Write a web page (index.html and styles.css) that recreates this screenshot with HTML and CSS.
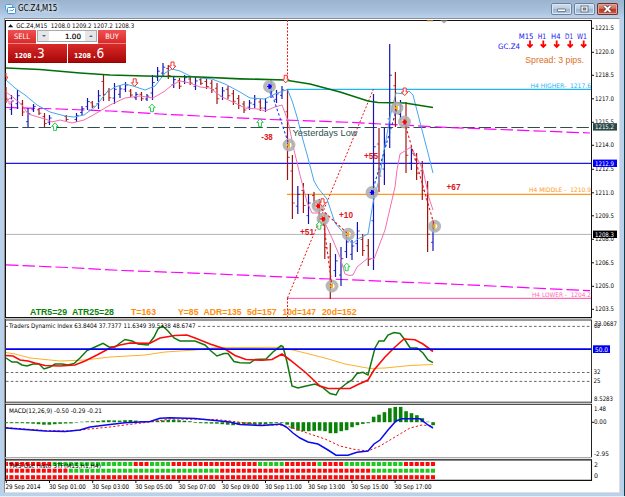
FILE: index.html
```html
<!DOCTYPE html>
<html lang="en">
<head>
<meta charset="utf-8">
<title>GC.Z4,M15</title>
<link rel="stylesheet" href="styles.css">
</head>
<body>
<div class="window">
  <header class="titlebar">
    <svg class="app-icon" width="11" height="10" viewBox="0 0 11 10">
      <rect x="0.5" y="0.5" width="7" height="6" rx="1" fill="#e8f5ff" stroke="#4d9bd8"/>
      <rect x="2.5" y="3.5" width="8" height="6" rx="1" fill="#fff" stroke="#3d8fd0"/>
      <path d="M4 7.5l1.5-1.5 1.5 1 2-2" fill="none" stroke="#4d9bd8"/>
    </svg>
    <span class="title">GC.Z4,M15</span>
    <div class="controls">
      <span class="btn"><svg width="21" height="12" viewBox="0 0 21 12"><rect x="6.5" y="6" width="8" height="2.6" rx=".5" fill="#fff" stroke="#56606c" stroke-width=".8"/></svg></span>
      <span class="btn"><svg width="21" height="12" viewBox="0 0 21 12"><rect x="7" y="3" width="7" height="6" fill="#fff" stroke="#56606c" stroke-width=".8"/><rect x="9.2" y="5" width="2.6" height="2" fill="#8ea9c8" stroke="#56606c" stroke-width=".8"/></svg></span>
      <span class="btn close"><svg width="21" height="12" viewBox="0 0 21 12"><path d="M7.5 3l6 6M13.5 3l-6 6" stroke="#5c3434" stroke-width="3.2"/><path d="M7.5 3l6 6M13.5 3l-6 6" stroke="#fff" stroke-width="1.9"/></svg></span>
    </div>
  </header>
  <main class="client">
    <section class="panel main-panel">
      <svg id="price" width="615" height="299" viewBox="5 20 615 299"></svg>
      <div class="trade">
        <div class="trade-top">
          <span class="side">SELL</span>
          <div class="lots"><i class="step down"></i><b>1.00</b><i class="step up"></i></div>
          <span class="side">BUY</span>
        </div>
        <div class="trade-prices">
          <div class="quote"><small>1208</small><strong>.3</strong></div>
          <div class="quote"><small>1208</small><strong>.6</strong></div>
        </div>
      </div>
    </section>
    <section class="panel"><svg id="tdi" width="615" height="84" viewBox="5 319 615 84"></svg></section>
    <section class="panel"><svg id="macd" width="615" height="56" viewBox="5 403 615 56"></svg></section>
    <section class="panel"><svg id="tms" width="615" height="33" viewBox="5 459 615 33"></svg></section>
  </main>
</div>
<script src="chart.js"></script>
</body>
</html>
```
FILE: styles.css
```css
* { box-sizing: border-box; }
body { margin: 0; width: 625px; height: 497px; overflow: hidden; background: #e6eef6; }
.window {
  width: 625px; height: 496px; display: flex; flex-direction: column;
  background: #b9d1ea; border-right: 1px solid #123c48;
}
.titlebar {
  height: 18px; flex: none; display: flex; align-items: center;
  padding: 0 6px 0 5px; gap: 2px;
  background: linear-gradient(#9bb3cf, #a6bfda 55%, #bad2ec);
}
.app-icon { flex: none; }
.title {
  font: 8px/18px "DejaVu Sans Condensed", "DejaVu Sans", sans-serif;
  color: #000; text-shadow: 0 0 4px #fff, 0 0 5px #fff; letter-spacing: -.1px;
}
.controls { margin-left: auto; display: flex; gap: 2px; }
.btn {
  width: 21px; height: 12px; display: block; border-radius: 2px;
  background: linear-gradient(#d3e0ef, #bccfe5 45%, #9cb6d3 50%, #b7cde6);
  box-shadow: inset 0 0 0 1px #6d819b, inset 0 0 0 2px #dbe7f4;
}
.btn svg { display: block; }
.close {
  background: linear-gradient(#e0a090, #cf7460 45%, #b93420 50%, #d0644a);
  box-shadow: inset 0 0 0 1px #70302c, inset 0 0 0 2px #e2a498;
}
.client {
  margin: 0 4px 0 4px; flex: none; background: #fff;
  border-top: 1px solid #8f8f8f; border-left: 1px solid #8f8f8f;
  border-bottom: 1px solid #dfdfdf; border-right: 1px solid #dfdfdf;
  padding-top: 1px; height: 475px;
}
.panel { height: auto; }
.panel > svg { display: block; }
.main-panel { position: relative; }
.trade { position: absolute; left: 3px; top: 10px; width: 118px; }
.trade-top { display: flex; height: 14px; justify-content: space-between; }
.side {
  width: 28px; background: linear-gradient(#f05050, #da2a2a);
  border-bottom: 1px solid #e88; color: #fff; text-align: center;
  font: 7.4px/14px "DejaVu Sans Condensed", sans-serif;
}
.lots {
  width: 60px; height: 12px; display: flex; border: 1px solid #a9a9a9; background: #fff;
}
.lots b { flex: 1; text-align: right; padding-right: 4px; font: 7.2px/11px "DejaVu Sans", sans-serif; color: #000; -webkit-text-stroke: .2px #000; }
.step { width: 11px; background: #e6e6e6; display: flex; align-items: center; justify-content: center; }
.step::after { content: ""; border: 2px solid transparent; }
.down::after { border-top-color: #46689c; margin-top: 2px; }
.up::after { border-bottom-color: #46689c; margin-bottom: 2px; }
.trade-prices { display: flex; gap: 1px; height: 18.5px; }
.quote {
  flex: 1; display: flex; align-items: baseline; gap: 1.5px; padding-left: 6.5px; color: #fff;
  background: linear-gradient(#da2a2a, #a80808); border-bottom: 1px solid #900;
  font-family: "DejaVu Sans Condensed", sans-serif;
}
.quote small { font-size: 6.8px; font-weight: bold; line-height: 19px; }
.quote strong { font-size: 13.5px; font-weight: normal; line-height: 19px; }
text { font-family: "DejaVu Sans", sans-serif; white-space: pre; }
.arial { font-family: "Liberation Sans", Arial, sans-serif; }
.bold { font-weight: bold; }
```
FILE: chart.js
```javascript
const NS = 'http://www.w3.org/2000/svg';
let layer;
const use = id => { layer = document.getElementById(id); };

function el(name, attrs) {
  const e = document.createElementNS(NS, name);
  for (const k in attrs) e.setAttribute(k, attrs[k]);
  layer.appendChild(e);
  return e;
}
const rect = (x, y, width, height, fill) => el('rect', { x, y, width, height, fill });
const path = (d, stroke, w = 1, dash = '') =>
  el('path', { d, stroke, fill: 'none', 'stroke-width': w, 'stroke-dasharray': dash });
const curve = (pts, stroke, w, dash) => path('M' + pts, stroke, w, dash);
function text(s, x, y, width, fill = '#000', size = 6.3, cls = '') {
  const t = el('text', { x, y, fill, textLength: width, lengthAdjust: 'spacingAndGlyphs', class: cls });
  t.style.fontSize = size + 'px';
  t.textContent = s;
}
const RED = '#a01414', BLUE = '#1414b4', INK = '#000';

/* ---- price ---- */
use('price');
path('M5.5 20V318M5 20.5H592M591.5 20V318M5 317.5H592', '#111');
path('M5 318.8H592', '#999', .8);
path('M6 127.5H591', '#2f4f4f', 1, '12.3 4');
path('M6 163.4H591', '#1818f0', 1.1);
path('M6 234.4H591', '#b4b4b4', 1);
path('M287 89.4H591', '#1eb4f5', 1.1);
path('M287 194.4H591', '#ff9a1e', 1.1);
path('M287 298.4H591', '#ff69b4', 1.1);
curve('6 107.5 60 109 110 111 160 114 210 116.5 270 119.5 350 122.3 400 125 450 127.5 590 133', '#f0f', 1.2, '12.5 4');
curve('6 264.8 67 267.5 122 270.5 200 273.3 330 279 460 284.5 590 290.7', '#f0f', 1.2, '12.5 4');
path('M287.5 20V80M287.5 298V318', '#f01414', 1, '2 1.5');
path('M287.5 298L373.5 89', '#f01414', 1, '2 1.8');

const bars = [
  [6, 87, 103, 0], [11.5, 95, 115, 1], [17.5, 90, 109, 1], [22.5, 100, 116, 0], [28, 108, 127, 1],
  [33.5, 104, 112, 1], [39, 108, 115, 0], [44.5, 113, 127, 0], [49.5, 115, 125, 1], [66.3, 115, 121, 0],
  [76.5, 113, 122, 1], [82, 106, 115, 1], [87.5, 98, 110, 1], [92.3, 101, 108, 0], [98.5, 90, 109, 1],
  [103.5, 75, 101, 0], [109, 88, 101, 0], [114.5, 83, 104, 1], [120, 85, 98, 1], [125.5, 82, 92, 1],
  [130.7, 89, 97, 0], [136, 92, 100, 1], [141.5, 92, 101, 0], [147, 94, 101, 1], [152.5, 75, 100, 1],
  [157.6, 67, 81, 1], [163, 63, 77, 1], [168.3, 65, 79, 0], [173.7, 76, 88, 1], [179.5, 78, 89, 0],
  [184.6, 75, 84, 1], [190.2, 77, 85, 0], [195.5, 77, 90, 1], [200.8, 78, 85, 0], [206.5, 79, 89, 0],
  [211.8, 80, 93, 0], [217, 83, 104, 0], [222.5, 87, 100, 1], [228, 86, 99, 0], [233.4, 90, 105, 0],
  [238.7, 95, 109, 0], [244, 101, 113, 0], [249.5, 100, 110, 1], [254.7, 95, 108, 1], [260.3, 99, 111, 0],
  [265.5, 98, 112, 1], [271, 79, 98, 1], [276.5, 90, 103, 1], [282, 86, 99, 1], [287.5, 89, 180, 0],
  [292.4, 155, 219, 0], [297.8, 186, 214, 1], [303.4, 183, 213, 0], [308.5, 194, 224, 1], [314, 192, 206, 0],
  [319.2, 199, 225, 0], [324.8, 213, 259, 0], [330.3, 243, 299, 0], [335.5, 254, 277, 1], [341, 247, 286, 1],
  [346.5, 235, 258, 1], [352, 240, 260, 1], [357.4, 222, 252, 1], [362.7, 234, 256, 0], [368.3, 239, 266, 0],
  [373.5, 94, 270, 1], [379, 128, 192, 0], [384.4, 128, 185, 1], [389.7, 44, 148, 1], [395.4, 72, 127, 0],
  [400.5, 100, 120, 1], [406, 102, 173, 0], [411.4, 146, 170, 1], [416.6, 153, 180, 0], [422.3, 161, 200, 0],
  [427.6, 181, 252, 0], [433, 220, 251, 1]
];
bars.forEach(([x, top, bottom, up]) => {
  const h = bottom - top, open = up ? bottom - h * .28 : top + h * .25, close = up ? top + h * .3 : bottom - h * .25;
  const color = up ? BLUE : RED;
  path(`M${x} ${top}V${bottom}`, color, 1.2);
  path(`M${x - 2} ${open}H${x}M${x} ${close}H${x + 2.3}`, color, .8);
});

curve('6 80 15 88 25 95 37 105 50 112 65 116 74 117 84 115 95 107 107 92 115 87 125 84 133 86 145 90 155 86 165 73 172 69 180 71 190 76 200 78 212 79 225 84 240 92 250 98 265 99 275 94 287.5 89.5 292.5 102 297 117 303 140 308 158 314 181 318 188 327 199 335 223 347 237 352 244 358 239 368 234 373 203 379 180 390 117 396 93 405 94 409 91 413 95 422 130 428 153 433 173', '#46a5f0');
curve('6 92 14 98 22 105 28 114 38 117 48 120 52 122 60 120 72 123 84 120 95 114 110 105 125 98 140 96 153 98 165 91 172 85 180 81 190 83 200 87 210 88 222 97 235 103 245 108 258 109 265 111 275 107 282 105 288 121 294 150 300 175 307 202 312 213 320 213 325 223 332 238 340 257 345 274 349 275.5 353 275 357 267 368 258 374 259 385 230 395 187 397 170 400 154 411 147 418 160 423 170 429 198 433 210', '#f56eaf');
curve('6 68 40 69.5 80 73 110 75 145 76 200 77 240 78.8 285 80 310 84 340 92 368 101 378 102.5 405 103 433 107.5', '#006e0a', 1.7);

const trades = [
  ['269.5 86.5 289 145', '#14f'], ['318 206 348 234', '#e11'], ['323 219 332 286', '#e11'],
  ['372 192.5 397 108', '#14c'], ['404.5 122 434.5 226', '#e11']
];
const marks = [
  [269.5, 86.5, 'b'], [289, 145, 'y'], [318, 206, 'r'], [323, 219, 'r'], [348.3, 234.3, 'y'],
  [332, 286, 'y'], [372, 192.5, 'b'], [397, 108, 'y'], [404.5, 122, 'r'], [434.7, 226.3, 'y']
];
marks.forEach(([cx, cy]) => el('circle', { cx, cy, r: 4.5, fill: 'none', stroke: '#aeaeae', 'stroke-width': 3.9, 'stroke-opacity': .88 }));
trades.forEach(([pts, c]) => curve(pts, c, 1.1, '2.5 2.2'));
marks.forEach(([x, y, kind]) => {
  if (kind === 'y') el('path', { d: `M${x - 2.8} ${y}l3.6 -3v6z`, fill: '#f5a800' });
  else el('path', { d: `M${x - 2.4} ${y - .7}h1.2v-1.8h1.2l2.6 2.5l-2.6 2.5h-1.2v-1.8h-1.2z`, fill: kind === 'b' ? '#00f' : '#f00' });
});

const arrow = (x, y, dir, c) =>
  el('path', { d: `M${x - 1.5} ${y - 3.7 * dir}h3v${4 * dir}h1.8l-3.3 ${3.6 * dir}l-3.3 ${-3.6 * dir}h1.8z`, fill: '#fff', stroke: c, 'stroke-width': 1 });
[[134.7, 82.5], [172.5, 65.7], [285.7, 79], [322.5, 202.5], [404.7, 91.7]].forEach(([x, y]) => arrow(x, y, 1, '#f03228'));
[[55, 126.7], [152, 108], [260, 122.7], [319.3, 225.5], [346.7, 267]].forEach(([x, y]) => arrow(x, y, -1, '#28d250'));
el('path', { d: 'M6 73v4h1.8l-1.8 3', fill: '#fff', stroke: '#f03228' });
el('path', { d: 'M7 101l3-3 3 3h-2v3h-2v-3z', fill: '#fff', stroke: '#f56eaf' });

text('Yesterdays Low', 292.5, 136, 65, '#2f4f4f', 9, 'arial');
[['-38', 261.3, 139.9, 11.5], ['+55', 364, 158.7, 14], ['+67', 446.5, 189.5, 14], ['+10', 339, 218.4, 14], ['+51', 300, 235.4, 14]]
  .forEach(([s, x, y, w]) => text(s, x, y, w, '#e1141e', 8.6, 'arial bold'));
text('H4 HIGHER-  1217.6', 530.5, 88, 60.5, '#1eb4f5', 6.2);
text('H4 MIDDLE -  1210.9', 529, 192.3, 62, '#ff9a1e', 6.2);
text('H4 LOWER -  1204.2', 532, 297, 59, '#ff69b4', 6.2);

[['ATR5=29', 30, 37], ['ATR25=28', 72, 42]].forEach(([s, x, w]) => text(s, x, 314.7, w, '#0a820a', 9.6, 'arial bold'));
[['T=163', 131, 25], ['Y=85', 178, 20.5], ['ADR=135', 203.5, 38], ['5d=157', 247, 29.5], ['10d=147', 282.5, 33.5], ['20d=152', 322, 34.5]]
  .forEach(([s, x, w]) => text(s, x, 314.7, w, '#ff8c0a', 9.6, 'arial bold'));

[['M15', 518.7, 14.8], ['H1', 537.7, 8.5], ['H4', 551, 9.5], ['D1', 565, 8], ['W1', 577, 10]]
  .forEach(([s, x, w]) => text(s, x, 38.5, w, '#1414f0', 7.4));
text('GC.Z4', 498, 48.9, 22, '#1414f0', 7.4);
[530, 543.3, 556.7, 570.2, 583.7].forEach(x => {
  path(`M${x} 40.5V46M${x - 2.6} 44.3l2.6 2.7l2.6 -2.7`, '#f00', 1.8);
});
text('Spread: 3 pips.', 525.3, 63, 58.7, '#dc6e1e', 9, 'arial');
rect(427, 20, 6, 1.2, '#9c6414');
el('path', { d: 'M440.5 20.5h7l-3.5 3z', fill: '#aaa' });

el('path', { d: 'M8 27.2l2.6 -3 2.6 3z', fill: '#111' });
text('GC.Z4,M15  1208.0 1209.2 1207.2 1208.3', 16.2, 27.8, 118, INK);

const priceTicks = [28, 52, 75, 98.5, 122, 145, 169, 192.5, 215.5, 239, 262.5, 286, 309];
priceTicks.forEach((y, i) => {
  path(`M592 ${y + .3}H594`, '#111');
  text((1221.5 - 1.5 * i).toFixed(1), 595, y + 2.4, 19, INK);
});
[[126.8, '1215.2', '#2a4a4a'], [163.2, '1212.9', '#0000f5'], [234.2, '1208.3', '#000']].forEach(([y, s, bg]) => {
  rect(593, y - 3.6, 24, 7.4, bg);
  text(s, 595, y + 2.4, 19, '#fff');
});

/* ---- traders dynamic index ---- */
use('tdi');
path('M5.5 319V403M5 320H592M591.5 320V403M5 402.2H592', '#333');
path('M6 326.4H591M6 372.5H591M6 381.4H591', '#444', .8, '2.6 2.2');
rect(8, 322, 189, 7.5, '#fff');
curve('6 352.5 15 354 30 358 60 361 85 360 110 357 145 355 165 352 195 350 215 347.7 280 347.3 295 350.5 325 358 345 364 370 368.5 385 368 410 365.5 433 364.5', '#ffaf28');
curve('6 358 12 362 17 362 22 365 27 366 33 364 39 364 44 369 50 367 55 364 62 364 68 365 74 363.5 80 358 87 350.5 95 347 103 343.3 109 347 115 347 120 343 125 339.5 132 341 138 344 148 345 154 337 158 329 162.5 326 168 331 174 338 180 341 195 341 205 345 211 351 217 356 224 353.5 228 353.5 234 361.5 240 362.7 250 363 255 359.5 266 359 273 352 281 345.7 283 346.5 287 362 292 386 298 388 304 386.5 315 384 322 387 330 393.5 336 395 339 389.5 347 383 352 380 357 373.5 363 372.3 368 375 375 348 379 341 384 341 388 335 394 332.5 400 333.5 405 340 410 347.7 417 348 423 353 428 360 433 362.7', '#0f780f', 1.5);
curve('6 355.5 13 356 20 360 28 361 35 363 45 365.5 60 366 75 365 85 361 97 355 110 348 120 345 130 343 150 343.3 160 338 175 335.5 187 335 195 338 210 344 225 349 235 355.5 246 359.5 262 360.3 272 359.5 282 354 290 360 305 372 320 386 328 388.5 350 388.5 358 384.5 368 380 374 370 385 357 395 347 404 339 415 339.7 423 344 433 351.5', '#fa0a0a', 1.6);
path('M6 349.2H591', '#0000f0', 1.7);
text('Traders Dynamic Index 63.8404 37.7377 11.6349 39.5338 48.6747', 9, 327.5, 186.5, INK);
[[323.6, '73.0687', 22.5, 594.5], [325.6, '68', 6, 594], [372, '32', 7, 593.5], [381, '25', 7, 593.5], [398.2, '8.5283', 19, 594]]
  .forEach(([y, s, w, x]) => text(s, x, y + 2.4, w, INK));
rect(593, 345.3, 17, 7.7, '#0000f5');
text('50.0', 595, 351.5, 13, '#fff');

/* ---- macd ---- */
use('macd');
path('M5.5 403V459M5 404.3H592M591.5 404V458', '#222');
path('M5 457.6H592', '#aaa', 1.2);
path('M5 403.3H592', '#ccc', .8);
const STEP = 5.405;
const hist = [
  1, 1, 1, 1, 1.2, 1.5, 2, 2.5, 2.5, 2, 1.6, 1.3, 1.2, .5, -.5, -.8, -1, -1.3, -1.8, -2, -1.8, -1.6, -2, -2.2, -1.6, -1.2, -1,
  -1, -1.6, -1.8, -2.3, -2.5, -2, -1.5, -1, .7, 1, 1.2, 1.4, 1.5, 2, 2.5, 3, 2.5, 2.5, 2, 2.5, 2.3, 2, 1.4, .8, .7, 2.5,
  6.5, 8.5, 9, 9, 8.7, 8.5, 9, 11, 11, 9, 8, 5, 3, 1.7, 1, -5.5, -7.5, -10, -14, -15.3, -15.3, -11, -9, -7, -4, -.5, 3
];
hist.forEach((v, i) => rect(6 + STEP * i - 1.7, v > 0 ? 422.2 : 422.2 + v, 3.6, Math.abs(v), '#0a820a'));
curve('6 427.5 25 429 45 430.5 70 431 90 429 110 427 125 425 150 422 170 419 215 419.5 230 421 262 425 280 425 290 427 310 434 325 439 340 446 355 449.5 368 451 380 446 395 437 410 428 422 425 433 426', '#f01414', 1, '2.3 2');
curve('6 428 25 429.5 45 431 65 431.5 80 430 90 427 110 424.5 125 422.7 150 421.5 160 418.3 170 417.8 195 418.5 210 420 230 422 240 424.5 262 425.5 272 424.7 281 424 287 427.5 293 433 300 438 308 442 318 444 328 450 336 455.2 348 455.2 357 452.3 368 451 374 444 380 440 388 430 396 421 402 418.7 420 418.8 428 425 433 428', '#0a0af0', 1.5);
text('MACD(12,26,9) -0.50 -0.29 -0.21', 9, 412.5, 93, INK);
[[409, '1.48', 12], [422, '0.00', 12.5], [453.8, '-2.95', 15]].forEach(([y, s, w]) => text(s, 594, y + 2.4, w, INK));
path('M592 422.3H594', '#111');

/* ---- multi-timeframe histogram and time scale ---- */
use('tms');
path('M5.5 459V481M5 459.9H592M591.5 460V481M5 480.4H592', '#111', 1.1);
const within = (x, ranges) => ranges.some(([a, b]) => x >= a && x <= b);
const rows = [
  [464, [[52, 133], [148, 171], [257, 283], [317, 321], [344, 403]]],
  [470.7, [[69, 220], [370, 440]]],
  [477.2, []]
];
rows.forEach(([y, green]) => {
  for (let i = 0; i < 80; i++) {
    const x = 6 + STEP * i, left = Math.max(6.2, x - 2);
    rect(left, y - 2, x + 2 - left, 4, within(x, green) ? '#1ec81e' : '#fa0a0a');
  }
});
text('TMS-Osc Histo 3TF(M15,H1,H4)', 9, 467.5, 92, INK);
text('2', 594, 466.8, 4, INK);
text('0', 594, 477.8, 4, INK);
['29 Sep 2014', '30 Sep 01:00', '30 Sep 03:00', '30 Sep 05:00', '30 Sep 07:00', '30 Sep 09:00', '30 Sep 11:00', '30 Sep 13:00', '30 Sep 15:00', '30 Sep 17:00']
  .forEach((s, i) => {
    const x = 6 + 43.2 * i;
    path(`M${x + .3} 481V483`, '#111');
    text(s, i ? x - .3 : 5.5, 489, i ? 37 : 35, INK, 6.5);
  });
```
